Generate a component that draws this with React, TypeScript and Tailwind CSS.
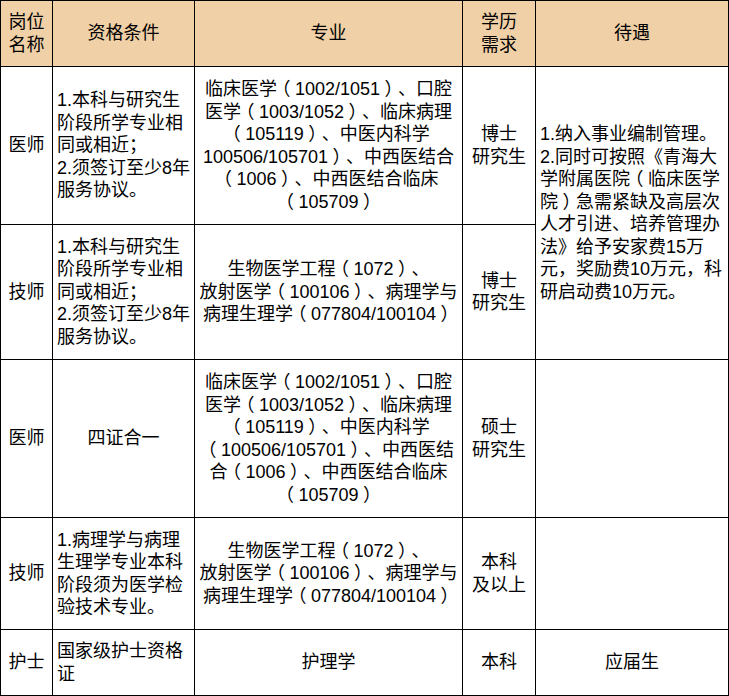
import React from "react";

const renderLine = (l: string) =>
  l.split(/([（）])/).map((part, i) =>
    part === "（" || part === "）" ? (
      <span key={i} className="inline-block w-[1em] text-center [font-feature-settings:'halt']">
        {part}
      </span>
    ) : (
      <React.Fragment key={i}>{part}</React.Fragment>
    )
  );

const Cell = ({
  lines,
  align = "center",
  head = false,
  className = "",
}: {
  lines: string[];
  align?: "center" | "left";
  head?: boolean;
  className?: string;
}) => (
  <div
    className={`flex items-center ${align === "center" ? "justify-center text-center" : "justify-start text-left pl-[4px]"} ${head ? "bg-[#f0d0a6]" : "bg-white"} ${className}`}
  >
    <div>
      {lines.map((l, i) => (
        <div key={i} className="whitespace-nowrap">
          {renderLine(l)}
        </div>
      ))}
    </div>
  </div>
);

const qual1 = ["1.本科与研究生", "阶段所学专业相", "同或相近；", "2.须签订至少8年", "服务协议。"];
const major1 = [
  "临床医学（1002/1051）、口腔",
  "医学（1003/1052）、临床病理",
  "（105119）、中医内科学",
  "100506/105701）、中西医结合",
  "（1006）、中西医结合临床",
  "（105709）",
];
const major2 = ["生物医学工程（1072）、", "放射医学（100106）、病理学与", "病理生理学（077804/100104）"];
const major3 = [
  "临床医学（1002/1051）、口腔",
  "医学（1003/1052）、临床病理",
  "（105119）、中医内科学",
  "（100506/105701）、中西医结",
  "合（1006）、中西医结合临床",
  "（105709）",
];
const treat = [
  "1.纳入事业编制管理。",
  "2.同时可按照《青海大",
  "学附属医院（临床医学",
  "院）急需紧缺及高层次",
  "人才引进、培养管理办",
  "法》给予安家费15万",
  "元，奖励费10万元，科",
  "研启动费10万元。",
];

export default function App() {
  return (
    <div
      className="w-[729px] h-[696px] bg-white text-black text-[18px] leading-[22.5px] [text-spacing-trim:space-all]"
      style={{ fontFamily: "'Liberation Sans', 'Noto Sans CJK SC', sans-serif" }}
    >
      <div className="grid grid-cols-[51px_141px_267px_72px_192px] grid-rows-[65px_157px_134px_157px_111px_65px] gap-px bg-black p-px w-[729px] h-[696px]">
        {/* header */}
        <Cell head lines={["岗位", "名称"]} />
        <Cell head lines={["资格条件"]} />
        <Cell head lines={["专业"]} />
        <Cell head lines={["学历", "需求"]} />
        <Cell head lines={["待遇"]} />

        {/* row 1 */}
        <Cell lines={["医师"]} />
        <Cell align="left" lines={qual1} />
        <Cell lines={major1} />
        <Cell lines={["博士", "研究生"]} />
        <Cell align="left" lines={treat} className="row-span-2" />

        {/* row 2 */}
        <Cell lines={["技师"]} />
        <Cell align="left" lines={qual1} />
        <Cell lines={major2} />
        <Cell lines={["博士", "研究生"]} />

        {/* row 3 */}
        <Cell lines={["医师"]} />
        <Cell lines={["四证合一"]} />
        <Cell lines={major3} />
        <Cell lines={["硕士", "研究生"]} />
        <Cell lines={[""]} />

        {/* row 4 */}
        <Cell lines={["技师"]} />
        <Cell align="left" lines={["1.病理学与病理", "生理学专业本科", "阶段须为医学检", "验技术专业。"]} />
        <Cell lines={major2} />
        <Cell lines={["本科", "及以上"]} />
        <Cell lines={[""]} />

        {/* row 5 */}
        <Cell lines={["护士"]} />
        <Cell align="left" lines={["国家级护士资格", "证"]} />
        <Cell lines={["护理学"]} />
        <Cell lines={["本科"]} />
        <Cell lines={["应届生"]} />
      </div>
    </div>
  );
}
